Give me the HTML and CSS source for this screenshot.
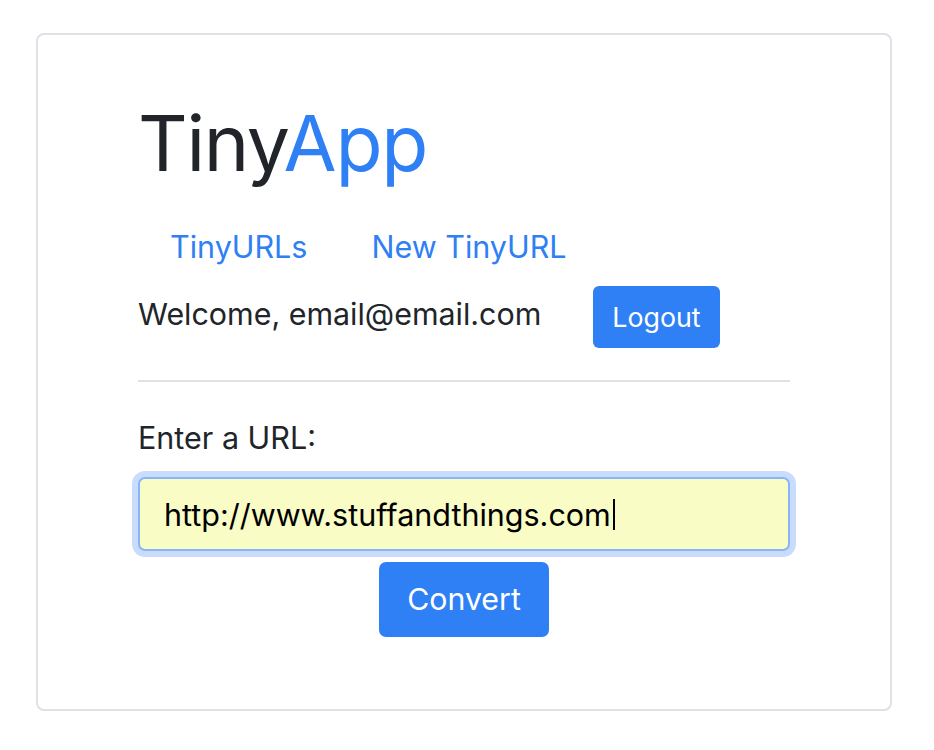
FILE: index.html
```html
<!DOCTYPE html>
<html lang="en">
<head>
<meta charset="utf-8">
<title>TinyApp</title>
<link rel="stylesheet" href="styles.css">
</head>
<body>
<main class="card">
  <h1 class="brand">Tiny<span class="brand-accent">App</span></h1>
  <nav class="nav">
    <a class="nav-link" href="#">TinyURLs</a>
    <a class="nav-link" href="#">New TinyURL</a>
  </nav>
  <div class="user-row">
    <span class="welcome">Welcome, email@email.com</span>
    <button class="btn btn-logout" type="button">Logout</button>
  </div>
  <hr class="divider">
  <form class="url-form">
    <label class="label" for="longURL">Enter a URL:</label>
    <div class="field" id="longURL"><span class="field-text">http://www.stuffandthings.com</span><span class="caret"></span></div>
    <div class="actions">
      <button class="btn btn-convert" type="button">Convert</button>
    </div>
  </form>
</main>
</body>
</html>
```
FILE: styles.css
```css
* { box-sizing: border-box; }
html, body { margin: 0; padding: 0; background: #fff; }
body {
  font-family: Inter, "Noto Sans", "Liberation Sans", sans-serif;
  color: #212529;
  padding: 33px 0 0 36px;
}
.card {
  width: 856px;
  height: 678px;
  border: 2px solid #dee2e6;
  border-radius: 8px;
  padding: 61px 100px 0 100px;
}
.brand {
  margin: 0;
  font-size: 77px;
  line-height: 94px;
  font-weight: 400;
  letter-spacing: -1.3px;
}
.brand-accent { color: #2f80f5; }
.nav {
  display: flex;
  margin-top: 26px;
}
.nav-link {
  color: #2f80f5;
  text-decoration: none;
  font-size: 30.5px;
  line-height: 46px;
  padding: 8px 32px;
}
.user-row {
  display: flex;
  align-items: flex-start;
  margin-top: 8px;
}
.welcome {
  font-size: 30.4px;
  line-height: 44px;
  margin-top: 6px;
  margin-right: 52px;
}
.btn {
  font-family: inherit;
  background: #2f80f5;
  color: #fff;
  border: 0;
  cursor: pointer;
}
.btn-logout {
  font-size: 26.8px;
  line-height: 42px;
  padding: 10px 19px;
  border-radius: 6px;
}
.divider {
  margin: 32px 0 0 0;
  border: 0;
  border-top: 2px solid #dfe1e4;
  height: 0;
}
.url-form { margin-top: 35px; }
.label {
  display: block;
  font-size: 30.5px;
  line-height: 42px;
}
.field {
  margin-top: 18px;
  height: 74px;
  border: 2px solid #86b6f6;
  border-radius: 7px;
  background: #f9fcc4;
  box-shadow: 0 0 0 6px #cadcfb;
  padding: 0 24px;
  display: flex;
  align-items: center;
  font-size: 30.5px;
  color: #000;
}
.caret {
  display: inline-block;
  width: 2px;
  height: 31px;
  background: #000;
  margin-left: 2px;
}
.actions {
  display: flex;
  justify-content: center;
  margin-top: 11px;
}
.btn-convert {
  font-size: 30.3px;
  line-height: 50px;
  padding: 12px 28px 13px;
  border-radius: 7px;
}
```
